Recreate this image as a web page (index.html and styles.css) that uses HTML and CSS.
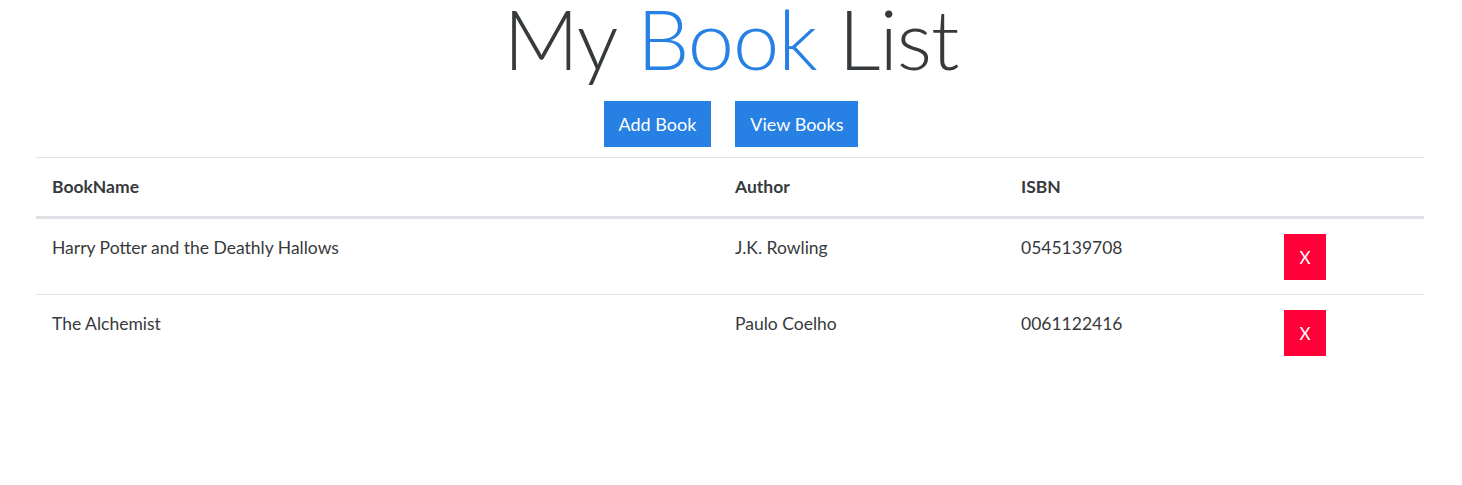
FILE: index.html
```html
<!DOCTYPE html>
<html lang="en">
<head>
<meta charset="utf-8">
<title>My Book List</title>
<link rel="stylesheet" href="styles.css">
</head>
<body>
<header class="page-header">
  <h1 class="title">My <span class="accent">Book</span> List</h1>
  <nav class="actions">
    <button class="btn btn-primary">Add Book</button>
    <button class="btn btn-primary">View Books</button>
  </nav>
</header>
<main class="content">
  <table class="books">
    <colgroup>
      <col class="c-name"><col class="c-author"><col class="c-isbn"><col class="c-act">
    </colgroup>
    <thead>
      <tr><th>BookName</th><th>Author</th><th>ISBN</th><th></th></tr>
    </thead>
    <tbody>
      <tr>
        <td>Harry Potter and the Deathly Hallows</td>
        <td>J.K. Rowling</td>
        <td>0545139708</td>
        <td class="act"><button class="btn btn-danger">X</button></td>
      </tr>
      <tr>
        <td>The Alchemist</td>
        <td>Paulo Coelho</td>
        <td>0061122416</td>
        <td class="act"><button class="btn btn-danger">X</button></td>
      </tr>
    </tbody>
  </table>
</main>
</body>
</html>
```

FILE: styles.css
```css
* { box-sizing: border-box; }

body {
  margin: 0;
  font-family: "Source Sans Pro", Lato, "Liberation Sans", sans-serif;
  font-size: 17.5px;
  line-height: 24px;
  color: #373a3c;
  background: #fff;
}

.page-header {
  display: flex;
  flex-direction: column;
  align-items: center;
}

.title {
  margin: 0;
  font-family: Lato, "Liberation Sans", sans-serif;
  font-weight: 300;
  font-size: 83px;
  line-height: 76px;
  letter-spacing: -1px;
  color: #373a3c;
}

.accent { color: #2780e3; }

.actions {
  display: flex;
  gap: 24px;
  margin-top: 25px;
}

.btn {
  border: 0;
  border-radius: 0;
  font-family: inherit;
  color: #fff;
  cursor: pointer;
}

.btn-primary {
  height: 46px;
  padding: 0 15px;
  font-size: 18px;
  background: #2780e3;
}

.btn-danger {
  width: 42px;
  height: 46px;
  padding: 0;
  font-size: 17px;
  background: #ff0039;
  display: block;
}

.content {
  padding: 10px 38px 0 36px;
}

.books {
  width: 100%;
  border-collapse: collapse;
}

.c-name { width: 683px; }
.c-author { width: 286px; }
.c-isbn { width: 263px; }
.c-act { width: 156px; }

.books th {
  text-align: left;
  font-weight: 700;
  padding: 17px 16px;
  border-top: 1px solid #dee2e6;
  border-bottom: 3px solid #dee2e6;
}

.books td {
  vertical-align: top;
  padding: 17px 16px 14px;
  border-bottom: 1px solid #dee2e6;
}

.books tbody tr:last-child td { border-bottom: 0; }

.books td.act {
  padding-top: 15px;
}
```
